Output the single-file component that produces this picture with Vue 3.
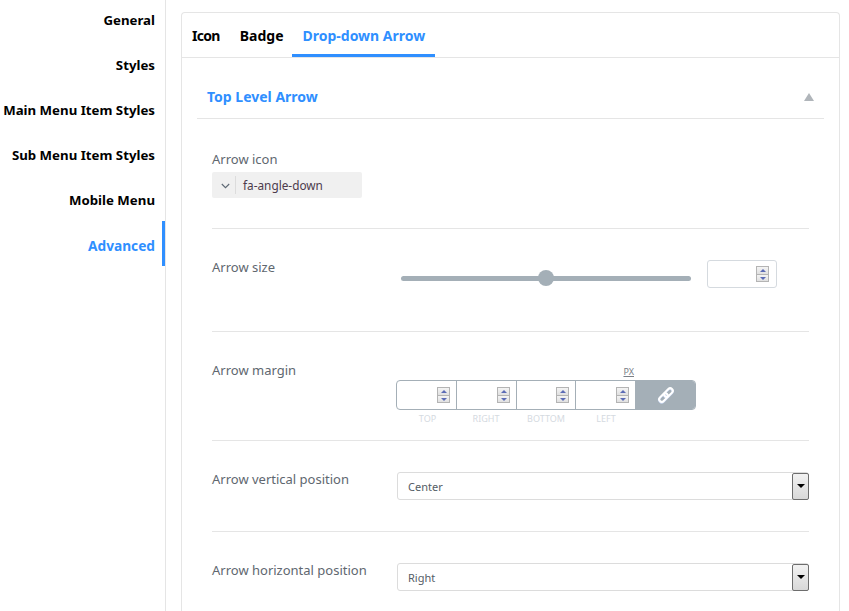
<script setup>
const navItems = [
  { label: 'General' },
  { label: 'Styles' },
  { label: 'Main Menu Item Styles' },
  { label: 'Sub Menu Item Styles' },
  { label: 'Mobile Menu' },
  { label: 'Advanced', active: true }
]
const tabs = [
  { label: 'Icon' },
  { label: 'Badge' },
  { label: 'Drop-down Arrow', active: true }
]
const margins = ['TOP', 'RIGHT', 'BOTTOM', 'LEFT']
</script>

<template>
  <div class="page">
    <nav class="sidebar">
      <a v-for="item in navItems" :key="item.label" class="nav-item" :class="{ active: item.active }">{{ item.label }}</a>
    </nav>
    <main class="main">
      <div class="card">
        <div class="tabs">
          <a v-for="tab in tabs" :key="tab.label" class="tab" :class="{ active: tab.active }">{{ tab.label }}</a>
        </div>
        <section class="section">
          <header class="section-head">
            <h3>Top Level Arrow</h3>
            <span class="caret"></span>
          </header>
          <div class="fields">
            <div class="field stacked">
              <label>Arrow icon</label>
              <div class="icon-picker">
                <span class="picker-arrow">
                  <svg width="9" height="6" viewBox="0 0 9 6"><path d="M.8 1l3.7 3.7L8.2 1" fill="none" stroke="#5d6873" stroke-width="1.1" /></svg>
                </span>
                <span class="picker-value">fa-angle-down</span>
              </div>
            </div>

            <div class="field size">
              <label>Arrow size</label>
              <div class="control size-control">
                <div class="slider"><span class="knob"></span></div>
                <div class="num-input">
                  <span class="spinner"><i class="up"></i><i class="down"></i></span>
                </div>
              </div>
            </div>

            <div class="field margin">
              <label>Arrow margin</label>
              <div class="control margin-control">
                <div class="unit"><span>PX</span></div>
                <div class="margin-group">
                  <div v-for="m in margins" :key="m" class="margin-cell">
                    <span class="spinner"><i class="up"></i><i class="down"></i></span>
                  </div>
                  <div class="link-btn">
                    <svg width="20" height="20" viewBox="0 0 20 20">
                      <g transform="rotate(-45 10 10)" fill="none" stroke-width="2">
                        <g stroke="#c9d8f5" transform="translate(-.6 .4)">
                          <rect x="1.5" y="7.4" width="10" height="5.2" rx="2.6" />
                          <rect x="8.5" y="7.4" width="10" height="5.2" rx="2.6" />
                        </g>
                        <rect x="1.5" y="7.4" width="10" height="5.2" rx="2.6" stroke="#fff" />
                        <rect x="8.5" y="7.4" width="10" height="5.2" rx="2.6" stroke="#fff" />
                      </g>
                    </svg>
                  </div>
                </div>
                <div class="captions">
                  <span v-for="m in margins" :key="m">{{ m }}</span>
                </div>
              </div>
            </div>

            <div class="field choice">
              <label>Arrow vertical position</label>
              <div class="control fake-select">
                <span class="select-value">Center</span>
                <span class="select-btn"><i></i></span>
              </div>
            </div>

            <div class="field choice last">
              <label>Arrow horizontal position</label>
              <div class="control fake-select">
                <span class="select-value">Right</span>
                <span class="select-btn"><i></i></span>
              </div>
            </div>
          </div>
        </section>
      </div>
    </main>
  </div>
</template>

<style>
html, body { margin: 0; background: #fff; overflow: hidden; }
</style>

<style scoped>
.page {
  display: flex;
  height: 611px;
  overflow: hidden;
  background: #fff;
  font-family: "Noto Sans", "Open Sans", sans-serif;
  color: #555d66;
}
.sidebar {
  flex: 0 0 165px;
  min-width: 0;
  border-right: 1px solid #e5e5e5;
  display: flex;
  flex-direction: column;
  margin-top: -4px;
  height: 700px;
}
.nav-item {
  height: 45px;
  flex: none;
  box-sizing: border-box;
  padding: 3px 10px 0 0;
  display: flex;
  align-items: center;
  justify-content: flex-end;
  font-size: 13.25px;
  font-weight: 700;
  color: #000;
  white-space: nowrap;
}
.nav-item.active {
  font-size: 13.7px;
  color: #2f8fff;
  border-right: 3px solid #2f8fff;
  padding-right: 7px;
}
.main {
  flex: 1;
  padding: 12px 9px 0 15px;
  min-width: 0;
}
.card {
  border: 1px solid #e5e5e5;
  border-bottom: 0;
  border-radius: 4px 4px 0 0;
  height: 700px;
}
.tabs {
  display: flex;
  height: 44px;
  border-bottom: 1px solid #e5e5e5;
}
.tab {
  box-sizing: border-box;
  height: 44px;
  padding: 4px 10px 0;
  display: flex;
  align-items: center;
  font-size: 14px;
  font-weight: 700;
  color: #000;
  border-bottom: 3px solid transparent;
}
.tab:nth-child(1) { letter-spacing: -.7px; }
.tab:nth-child(2) { padding-right: 9px; }
.tab.active {
  color: #2f8fff;
  border-bottom-color: #2f8fff;
}
.section {
  margin: 0 15px;
}
.section-head {
  height: 61px;
  box-sizing: border-box;
  border-bottom: 1px solid #e5e5e5;
  padding: 0 10px;
  display: flex;
  align-items: center;
  justify-content: space-between;
}
.section-head h3 {
  margin: 16px 0 0;
  font-size: 14px;
  font-weight: 700;
  color: #2f8fff;
}
.caret {
  margin-top: 18px;
  width: 0;
  height: 0;
  border-left: 5px solid transparent;
  border-right: 5px solid transparent;
  border-bottom: 8px solid #b0b5ba;
}
.fields {
  padding: 0 15px;
}
.field {
  display: flex;
  border-bottom: 1px solid #e5e5e5;
}
.field label {
  flex: 0 0 185px;
  font-size: 13px;
  line-height: 20px;
  color: #60676f;
  white-space: nowrap;
}
.control { flex: 1; min-width: 0; }
.stacked {
  flex-direction: column;
  padding: 30px 0 30px;
}
.stacked label { flex: none; height: 23px; }
.icon-picker {
  width: 150px;
  height: 26px;
  background: #f0f0f0;
  border-radius: 2px;
  display: flex;
  align-items: center;
  font-size: 11.8px;
  color: #4c3b4c;
}
.picker-arrow {
  box-sizing: border-box;
  width: 24px;
  height: 18px;
  padding: 2px 0 0 4px;
  border-right: 1px solid #dcdcdc;
  display: flex;
  align-items: center;
  justify-content: center;
}
.picker-value { margin-left: 7px; }
.size { padding: 28px 0 43px; }
.size-control {
  display: flex;
  align-items: center;
  margin-top: 3px;
  height: 28px;
  padding-left: 4px;
}
.slider {
  position: relative;
  width: 290px;
  height: 5px;
  border-radius: 3px;
  background: #a4afb7;
  margin-top: 9px;
}
.knob {
  position: absolute;
  left: 137px;
  top: -6px;
  width: 16px;
  height: 16px;
  border-radius: 50%;
  background: #a4afb7;
}
.num-input {
  box-sizing: border-box;
  margin-left: 16px;
  width: 70px;
  height: 28px;
  border: 1px solid #d5dadf;
  border-radius: 3px;
  display: flex;
  align-items: center;
  justify-content: flex-end;
  padding-right: 7px;
}
.spinner {
  display: flex;
  flex-direction: column;
  width: 13px;
  height: 16px;
  flex: none;
}
.spinner i {
  flex: 1;
  box-sizing: border-box;
  border: 1px solid #b4b4b4;
  background: linear-gradient(#f4f4f4, #e0e0e0);
  position: relative;
}
.spinner i + i { border-top: 0; }
.spinner i::after {
  content: '';
  position: absolute;
  left: 3px;
  top: 2px;
  width: 0;
  height: 0;
  border-left: 3px solid transparent;
  border-right: 3px solid transparent;
}
.spinner .up::after { border-bottom: 3px solid #5b6bb5; }
.spinner .down::after { border-top: 3px solid #5b6bb5; }
.margin { padding: 28px 0 0; height: 109px; box-sizing: border-box; }
.margin-control { margin-left: -1px; margin-top: 5px; }
.unit {
  width: 300px;
  height: 15px;
  display: flex;
  justify-content: flex-end;
  font-size: 9px;
  line-height: 14px;
  color: #7a8087;
}
.unit span {
  height: 14px;
  margin-right: 62px;
  text-decoration: underline;
}
.margin-group {
  box-sizing: border-box;
  width: 300px;
  height: 30px;
  display: flex;
  border: 1px solid #a4afb7;
  border-radius: 4px;
  overflow: hidden;
}
.margin-cell {
  box-sizing: border-box;
  flex: 0 0 60px;
  border-right: 1px solid #a4afb7;
  display: flex;
  align-items: center;
  justify-content: flex-end;
  padding-right: 6px;
}
.margin-cell:nth-child(3) { flex-basis: 59px; }
.link-btn {
  flex: 1;
  background: #a4afb7;
  display: flex;
  align-items: center;
  justify-content: center;
}
.captions {
  display: flex;
  width: 240px;
  margin-top: 3px;
  font-size: 9px;
  line-height: 12px;
  color: #d5dadf;
}
.captions span {
  flex: 0 0 60px;
  text-align: center;
  box-sizing: border-box;
}
.captions span:first-child { padding-left: 3px; }
.choice { padding: 28px 0 31px; }
.choice.last { border-bottom: 0; }
.fake-select {
  box-sizing: border-box;
  height: 28px;
  margin-top: 3px;
  border: 1px solid #dcdcdc;
  border-radius: 3px;
  display: flex;
  align-items: center;
  justify-content: space-between;
  font-size: 11px;
  color: #555d66;
}
.select-value { padding-left: 10px; }
.select-btn {
  box-sizing: border-box;
  width: 17px;
  height: 27px;
  border: 1px solid #6d6d6d;
  border-radius: 2px;
  background: linear-gradient(#f2f2f2, #d8d8d8);
  display: flex;
  align-items: center;
  justify-content: center;
  margin-right: -1px;
}
.select-btn i {
  width: 0;
  height: 0;
  border-left: 4px solid transparent;
  border-right: 4px solid transparent;
  border-top: 4px solid #000;
}
</style>
